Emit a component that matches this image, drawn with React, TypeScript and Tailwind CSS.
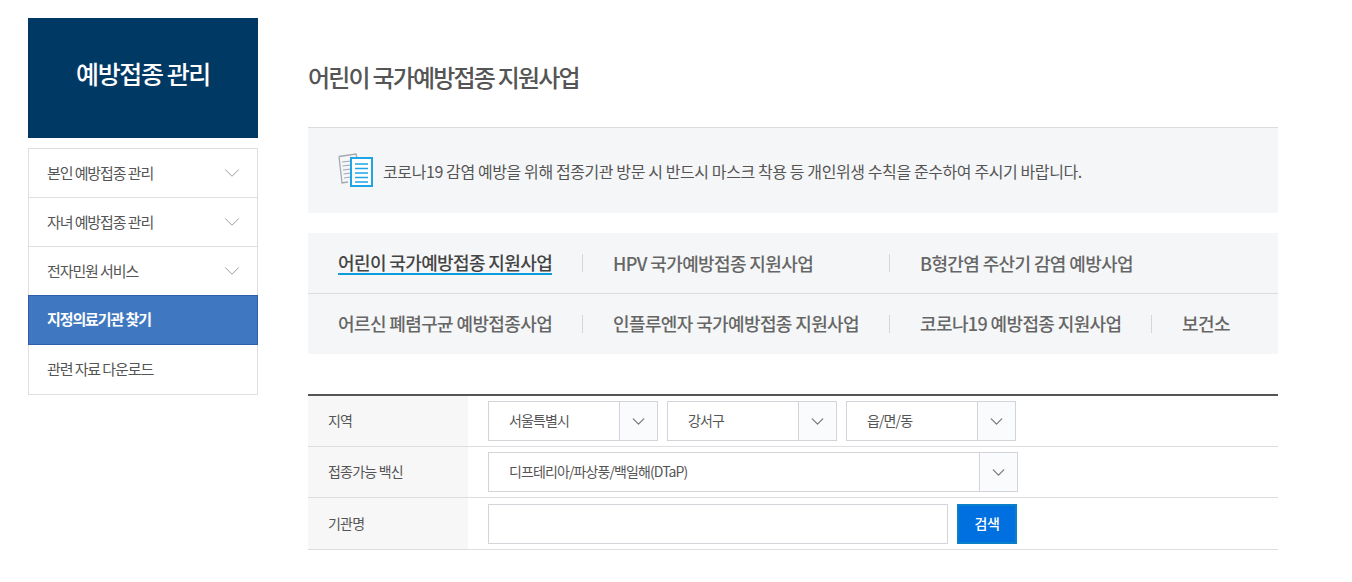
import React from 'react';
import { ChevronDown } from 'lucide-react';

const font = { fontFamily: '"Noto Sans CJK KR", "Noto Sans", sans-serif' };

const sideMenu = [
  { label: '본인 예방접종 관리', arrow: true, h: 'h-[49px] border-b border-[#dfdfdf]' },
  { label: '자녀 예방접종 관리', arrow: true, h: 'h-[49px] border-b border-[#dfdfdf]' },
  { label: '전자민원 서비스', arrow: true, h: 'h-[48px]' },
  { label: '지정의료기관 찾기', active: true, h: 'h-[50px]' },
  { label: '관련 자료 다운로드', h: 'h-[49px]' },
];

const tabRows = [
  [
    { label: '어린이 국가예방접종 지원사업', w: 'w-[274px]', active: true },
    { label: 'HPV 국가예방접종 지원사업', w: 'w-[307px]' },
    { label: 'B형간염 주산기 감염 예방사업', w: 'w-[262px]' },
  ],
  [
    { label: '어르신 폐렴구균 예방접종사업', w: 'w-[274px]' },
    { label: '인플루엔자 국가예방접종 지원사업', w: 'w-[307px]' },
    { label: '코로나19 예방접종 지원사업', w: 'w-[262px]' },
    { label: '보건소', w: 'w-[100px]' },
  ],
];

const Select = ({ label, w }: { label: string; w: string }) => (
  <div className={`flex h-10 border border-[#d2d4da] bg-white ${w}`}>
    <div className="flex-1 pl-5 text-sm leading-[36px] tracking-[-0.9px] text-[#555]">{label}</div>
    <div className="flex w-[38px] items-center justify-center border-l border-[#d2d4da] bg-[#fafbfd]">
      <ChevronDown size={21} strokeWidth={1.4} className="text-[#777]" />
    </div>
  </div>
);

const Row = ({ label, pad = 'py-[5px]', children }: { label: string; pad?: string; children: React.ReactNode }) => (
  <div className="flex border-b border-[#dcdee0]">
    <div className="flex w-[160px] items-center bg-[#f7f7f7] pb-0.5 pl-5 text-sm tracking-[-0.8px] text-[#555]">{label}</div>
    <div className={`flex flex-1 gap-[9px] pl-5 ${pad}`}>{children}</div>
  </div>
);

const DocIcon = () => (
  <svg width="36" height="36" viewBox="0 0 36 36" fill="none">
    <path d="M1 3.5 L18 1 L19 5 M10 29 L4 30 L1 3.5" stroke="#a4a9b0" strokeWidth="1.3" fill="#f5f6f8" />
    <path d="M4 9 L13 8 M4.5 13 L13 12 M5 17 L13 16 M5.5 21 L13 20 M6 25 L13 24" stroke="#a4a9b0" strokeWidth="1.2" />
    <rect x="13" y="5" width="21" height="28" fill="#fff" stroke="#1ea5e6" strokeWidth="2" />
    <path d="M17 11 H30 M17 15.5 H30 M17 20 H30 M17 24.5 H30 M17 29 H30" stroke="#1ea5e6" strokeWidth="1.5" />
  </svg>
);

export default function App() {
  return (
    <div className="flex h-[582px] w-[1352px] overflow-hidden bg-white pl-7 pt-[18px]" style={font}>
      {/* Left menu */}
      <aside className="w-[230px] shrink-0">
        <h2 className="flex h-[120px] items-center justify-center bg-[#013965] pb-2 text-[25px] font-medium tracking-[-1.4px] text-white">
          예방접종 관리
        </h2>
        <ul className="mt-[10px] border border-[#dfdfdf]">
          {sideMenu.map((item) =>
            item.active ? (
              <li
                key={item.label}
                className={`-mx-px flex items-center border border-[#2f5cab] bg-[#3f78c0] pb-0.5 pl-[18px] text-[15px] font-bold tracking-[-1.1px] text-white ${item.h}`}
              >
                {item.label}
              </li>
            ) : (
              <li
                key={item.label}
                className={`flex items-center justify-between pl-[18px] pr-3 text-[15px] tracking-[-1.1px] text-[#555] ${item.h}`}
              >
                {item.label}
                {item.arrow && <ChevronDown size={26} strokeWidth={0.9} className="text-[#999]" />}
              </li>
            ),
          )}
        </ul>
      </aside>

      {/* Main */}
      <main className="ml-[50px] w-[970px] shrink-0">
        <h1 className="h-[109px] pt-[41px] text-2xl leading-9 font-medium tracking-[-1.8px] text-[#555]">
          어린이 국가예방접종 지원사업
        </h1>

        <div className="flex h-[86px] items-center gap-[9px] border-t border-[#dcdcdc] bg-[#f5f6f8] pl-[30px] text-base tracking-[-0.4px] text-[#555]">
          <DocIcon />
          <span>코로나19 감염 예방을 위해 접종기관 방문 시 반드시 마스크 착용 등 개인위생 수칙을 준수하여 주시기 바랍니다.</span>
        </div>

        <div className="mt-5 bg-[#f5f6f8]">
          {tabRows.map((row, r) => (
            <div key={r} className={`flex items-center ${r === 0 ? 'h-[61px] border-b border-[#dcdee0]' : 'h-[60px]'}`}>
              {row.map((tab, i) => (
                <div
                  key={tab.label}
                  className={`flex h-[18px] items-center pl-[30px] text-lg font-medium tracking-[-0.62px] text-[#666] ${tab.w} ${i === 0 ? '' : 'border-l border-[#d5d7da]'} ${r === 1 ? 'pb-0.5' : ''}`}
                >
                  <span className={tab.active ? 'border-b-2 border-[#0b9ddf] leading-[22px] text-[#444]' : ''}>{tab.label}</span>
                </div>
              ))}
            </div>
          ))}
        </div>

        <div className="mt-10 border-t-2 border-[#555]">
          <Row label="지역">
            <Select label="서울특별시" w="w-[170px]" />
            <Select label="강서구" w="w-[170px]" />
            <Select label="읍/면/동" w="w-[170px]" />
          </Row>
          <Row label="접종가능 백신">
            <Select label="디프테리아/파상풍/백일해(DTaP)" w="w-[530px]" />
          </Row>
          <Row label="기관명" pad="pt-[6px] pb-[5px]">
            <div className="h-10 w-[460px] border border-[#d2d4da] bg-white" />
            <button className="h-10 w-[60px] border-2 border-[#0a7fca] bg-[#0070e0] pb-0.5 text-sm font-medium tracking-[-0.5px] text-white">검색</button>
          </Row>
        </div>
      </main>
    </div>
  );
}
